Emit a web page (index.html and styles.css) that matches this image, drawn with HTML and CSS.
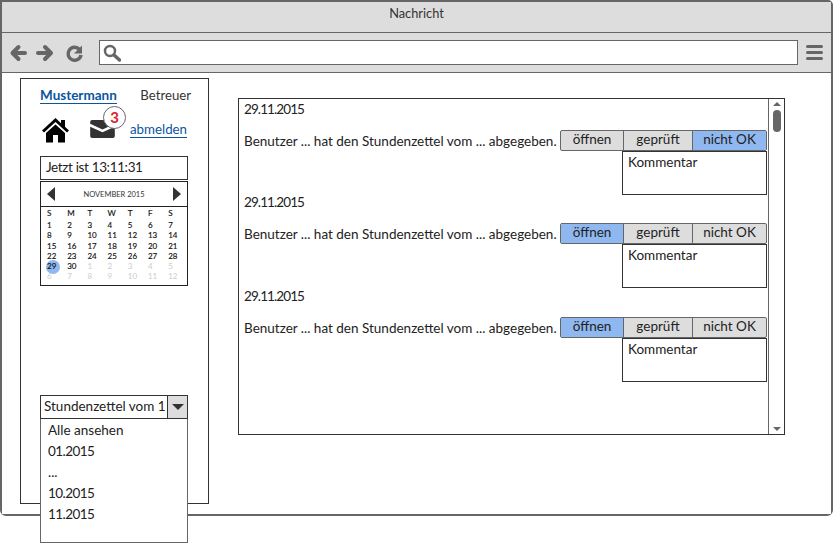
FILE: index.html
```html
<!DOCTYPE html>
<html lang="de">
<head>
<meta charset="utf-8">
<title>Nachricht</title>
<link rel="stylesheet" href="styles.css">
</head>
<body>
<div class="window">
  <div class="titlebar">Nachricht</div>
  <div class="toolbar">
    <svg class="nav" width="80" height="24" viewBox="0 0 80 24">
      <path d="M17 12H5M10.500 6 4.500 12l6 6" fill="none" stroke="#666" stroke-width="4" stroke-linecap="round" stroke-linejoin="round"/>
      <path d="M30 12h13M37 6l6 6-6 6" fill="none" stroke="#666" stroke-width="4" stroke-linecap="round" stroke-linejoin="round"/>
      <path d="M71.500 8.500A6.500 6.500 0 1 0 73 14" fill="none" stroke="#666" stroke-width="3.500"/>
      <path d="M74 4.500v8h-8z" fill="#666"/>
    </svg>
    <div class="address">
      <svg width="18" height="18" viewBox="0 0 18 18">
        <circle cx="7" cy="7" r="5" fill="none" stroke="#666" stroke-width="2.500"/>
        <path d="M11 11l5.500 5" stroke="#666" stroke-width="3.500" stroke-linecap="round"/>
      </svg>
    </div>
    <div class="burger"><span></span><span></span><span></span></div>
  </div>
  <div class="content">
    <aside class="sidebar">
      <div class="user-row">
        <a class="user">Mustermann</a>
        <span class="role">Betreuer</span>
      </div>
      <div class="icon-row">
        <svg class="home" width="30" height="26" viewBox="0 0 30 26">
          <path d="M14.500 1 1 13.500l2 2L14.500 5 26 15.500l2-2-4-3.700V3h-4v3.200z" fill="#000"/>
          <path d="M14.500 7.500 5 16v9.500h7V18h5v7.500h7V16z" fill="#000"/>
        </svg>
        <div class="mail">
          <svg width="25" height="18" viewBox="0 0 26 19">
            <path d="M0 2Q0 0 2 0H24Q26 0 26 2V4L13 10 0 4zM0 7l13 6 13-6V17Q26 19 24 19H2Q0 19 0 17z" fill="#333"/>
          </svg>
          <span class="badge">3</span>
        </div>
        <a class="logout">abmelden</a>
      </div>
      <div class="clock">Jetzt ist 13:11:31</div>
      <div class="calendar">
        <div class="cal-head">
          <span class="tri tri-l"></span>
          <span class="month">NOVEMBER 2015</span>
          <span class="tri tri-r"></span>
        </div>
        <div class="cal-grid">
          <span>S</span><span>M</span><span>T</span><span>W</span><span>T</span><span>F</span><span>S</span>
          <b>1</b><b>2</b><b>3</b><b>4</b><b>5</b><b>6</b><b>7</b>
          <b>8</b><b>9</b><b>10</b><b>11</b><b>12</b><b>13</b><b>14</b>
          <b>15</b><b>16</b><b>17</b><b>18</b><b>19</b><b>20</b><b>21</b>
          <b>22</b><b>23</b><b>24</b><b>25</b><b>26</b><b>27</b><b>28</b>
          <b class="today">29</b><b>30</b><i>1</i><i>2</i><i>3</i><i>4</i><i>5</i>
          <i>6</i><i>7</i><i>8</i><i>9</i><i>10</i><i>11</i><i>12</i>
        </div>
      </div>
      <div class="select">
        <div class="select-box">
          <span class="select-text">Stundenzettel vom 1</span>
          <span class="select-btn"><span class="down"></span></span>
        </div>
        <ul class="select-list">
          <li>Alle ansehen</li>
          <li class="num">01.2015</li>
          <li>...</li>
          <li class="num">10.2015</li>
          <li class="num">11.2015</li>
        </ul>
      </div>
    </aside>
    <main class="messages">
      <div class="list">
        <section class="item">
          <div class="date">29.11.2015</div>
          <div class="line">
            <span class="msg">Benutzer ... hat den Stundenzettel vom ... abgegeben.</span>
            <div class="seg">
              <span class="s1">öffnen</span><span class="s2">geprüft</span><span class="s3 on">nicht OK</span>
            </div>
          </div>
          <div class="comment">Kommentar</div>
        </section>
        <section class="item">
          <div class="date">29.11.2015</div>
          <div class="line">
            <span class="msg">Benutzer ... hat den Stundenzettel vom ... abgegeben.</span>
            <div class="seg">
              <span class="s1 on">öffnen</span><span class="s2">geprüft</span><span class="s3">nicht OK</span>
            </div>
          </div>
          <div class="comment">Kommentar</div>
        </section>
        <section class="item">
          <div class="date">29.11.2015</div>
          <div class="line">
            <span class="msg">Benutzer ... hat den Stundenzettel vom ... abgegeben.</span>
            <div class="seg">
              <span class="s1 on">öffnen</span><span class="s2">geprüft</span><span class="s3">nicht OK</span>
            </div>
          </div>
          <div class="comment">Kommentar</div>
        </section>
      </div>
      <div class="scrollbar">
        <span class="up"></span>
        <span class="thumb"></span>
        <span class="dn"></span>
      </div>
    </main>
  </div>
</div>
</body>
</html>
```
FILE: styles.css
```css
* { box-sizing: border-box; }
html, body { margin: 0; height: 543px; overflow: hidden; background: #fff; }
body { font-family: Lato, "Liberation Sans", sans-serif; font-size: 13.500px; color: #222; }
.window { width: 833px; height: 516px; border: 2px solid #666; border-radius: 0 5px 6px 6px; display: flex; flex-direction: column; }
.titlebar { height: 31px; flex: none; background: #ddd; border-bottom: 1px solid #666; text-align: center; line-height: 23px; font-size: 12.800px; color: #333; }
.toolbar { height: 40px; flex: none; background: #ddd; border-bottom: 1px solid #666; display: flex; align-items: center; padding: 0 8px 0 6px; }
.nav { flex: none; margin-right: 11px; }
.address { width: 699px; height: 25px; flex: none; background: #fff; border: 1px solid #666; display: flex; align-items: center; padding-left: 3px; }
.burger { margin-left: 8px; width: 18px; display: flex; flex-direction: column; gap: 3px; }
.burger span { height: 3px; border-radius: 2px; background: #666; }
.content { flex: 1; display: flex; align-items: flex-start; background: #fff; padding: 5px 0 0 18px; }
.sidebar { width: 189px; height: 426px; flex: none; border: 1px solid #333; padding: 8px 17px 0 19px; display: flex; flex-direction: column; }
.user-row { display: flex; justify-content: space-between; align-items: baseline; height: 19px; }
.user { color: #0b55a0; font-weight: 700; font-size: 13.500px; border-bottom: 1.500px solid #0b55a0; line-height: 15px; }
.role { font-size: 13.200px; color: #333; }
.icon-row { height: 36px; position: relative; display: flex; margin-top: 11px; }
.home { position: absolute; left: 1px; top: 0; }
.mail { position: absolute; left: 50px; top: 3px; }
.mail svg { display: block; }
.badge { position: absolute; left: 13px; top: -14px; width: 23px; height: 23px; border-radius: 50%; background: #fff; border: 1px solid #666; color: #d8232a; font-weight: 700; font-size: 15px; line-height: 21px; text-align: center; }
.logout { position: absolute; left: 90px; top: 5px; color: #0b55a0; font-size: 13.300px; border-bottom: 1px solid #0b55a0; line-height: 15px; }
.clock { width: 148px; height: 24px; margin-top: 3px; border: 1px solid #333; padding-left: 5px; line-height: 21px; font-size: 13.500px; letter-spacing: -0.350px; flex: none; }
.calendar { width: 148px; height: 105px; margin-top: 1px; flex: none; border: 1px solid #222; }
.cal-head { height: 25px; border-bottom: 1px solid #222; display: flex; align-items: center; justify-content: space-between; padding: 0 6px; }
.month { font-size: 7.500px; color: #333; }
.tri { width: 0; height: 0; border-top: 7px solid transparent; border-bottom: 7px solid transparent; }
.tri-l { border-right: 8px solid #333; }
.tri-r { border-left: 8px solid #333; }
.cal-grid { display: grid; grid-template-columns: repeat(7, 20.200px); grid-template-rows: 12px repeat(6, 10.300px); margin-left: -1px; font-size: 8px; line-height: 10px; margin-top: 1px; }
.cal-grid > * { padding-left: 7px; }
.cal-grid span, .cal-grid b { font-weight: 400; color: #111; -webkit-text-stroke: 0.150px #111; }
.cal-grid i { font-style: normal; color: #ccc; }
.cal-grid .today { position: relative; z-index: 0; }
.cal-grid .today::before { content: ""; position: absolute; z-index: -1; left: 5.500px; top: -1.500px; width: 14px; height: 14px; border-radius: 50%; background: #8fb8f0; }
.select { position: relative; width: 148px; margin-top: 109px; flex: none; }
.select-box { height: 24px; border: 1px solid #333; display: flex; }
.select-text { flex: 1; padding-left: 3px; line-height: 21px; white-space: nowrap; overflow: hidden; font-size: 13.500px; }
.select-btn { width: 20px; flex: none; background: #ddd; border-left: 1px solid #333; display: flex; align-items: center; justify-content: center; }
.down { width: 0; height: 0; border-left: 6px solid transparent; border-right: 6px solid transparent; border-top: 6px solid #333; }
.select-list { position: absolute; left: 0; top: 24px; width: 148px; height: 124px; margin: 0; padding: 1px 0 0 7px; list-style: none; background: #fff; border: 1px solid #666; border-top: 0; z-index: 2; }
.select-list li { height: 21px; line-height: 21px; }
.select-list .num { letter-spacing: -0.550px; }
.messages { width: 547px; height: 337px; flex: none; margin: 20px 0 0 29px; border: 1px solid #333; display: flex; }
.list { flex: 1; padding: 0 1px 0 5px; }
.item { height: 93px; }
.item:nth-child(2) { height: 94px; }
.date { height: 21px; line-height: 21px; letter-spacing: -0.900px; }
.line { height: 21px; margin-top: 10px; display: flex; justify-content: space-between; align-items: center; }
.msg { white-space: nowrap; }
.seg { width: 207px; height: 21px; flex: none; display: flex; border: 1px solid #666; border-radius: 2px; background: #ddd; font-size: 13.500px; }
.seg span { text-align: center; line-height: 17px; border-right: 1px solid #666; }
.seg span:last-child { border-right: 0; }
.s1 { width: 63px; }
.s2 { width: 69px; }
.s3 { flex: 1; }
.seg .on { background: #8fb8f0; }
.comment { width: 145px; height: 44px; margin: 0 0 0 378px; border: 1px solid #333; padding: 2px 5px; }
.scrollbar { width: 16px; flex: none; border-left: 1px solid #666; display: flex; flex-direction: column; align-items: center; }
.up { width: 0; height: 0; margin-top: 3px; border-left: 4px solid transparent; border-right: 4px solid transparent; border-bottom: 4px solid #666; }
.thumb { width: 8px; height: 22px; margin-top: 4px; border-radius: 4px; background: #666; }
.dn { width: 0; height: 0; margin-top: auto; margin-bottom: 3px; border-left: 4px solid transparent; border-right: 4px solid transparent; border-top: 4px solid #666; }
```
